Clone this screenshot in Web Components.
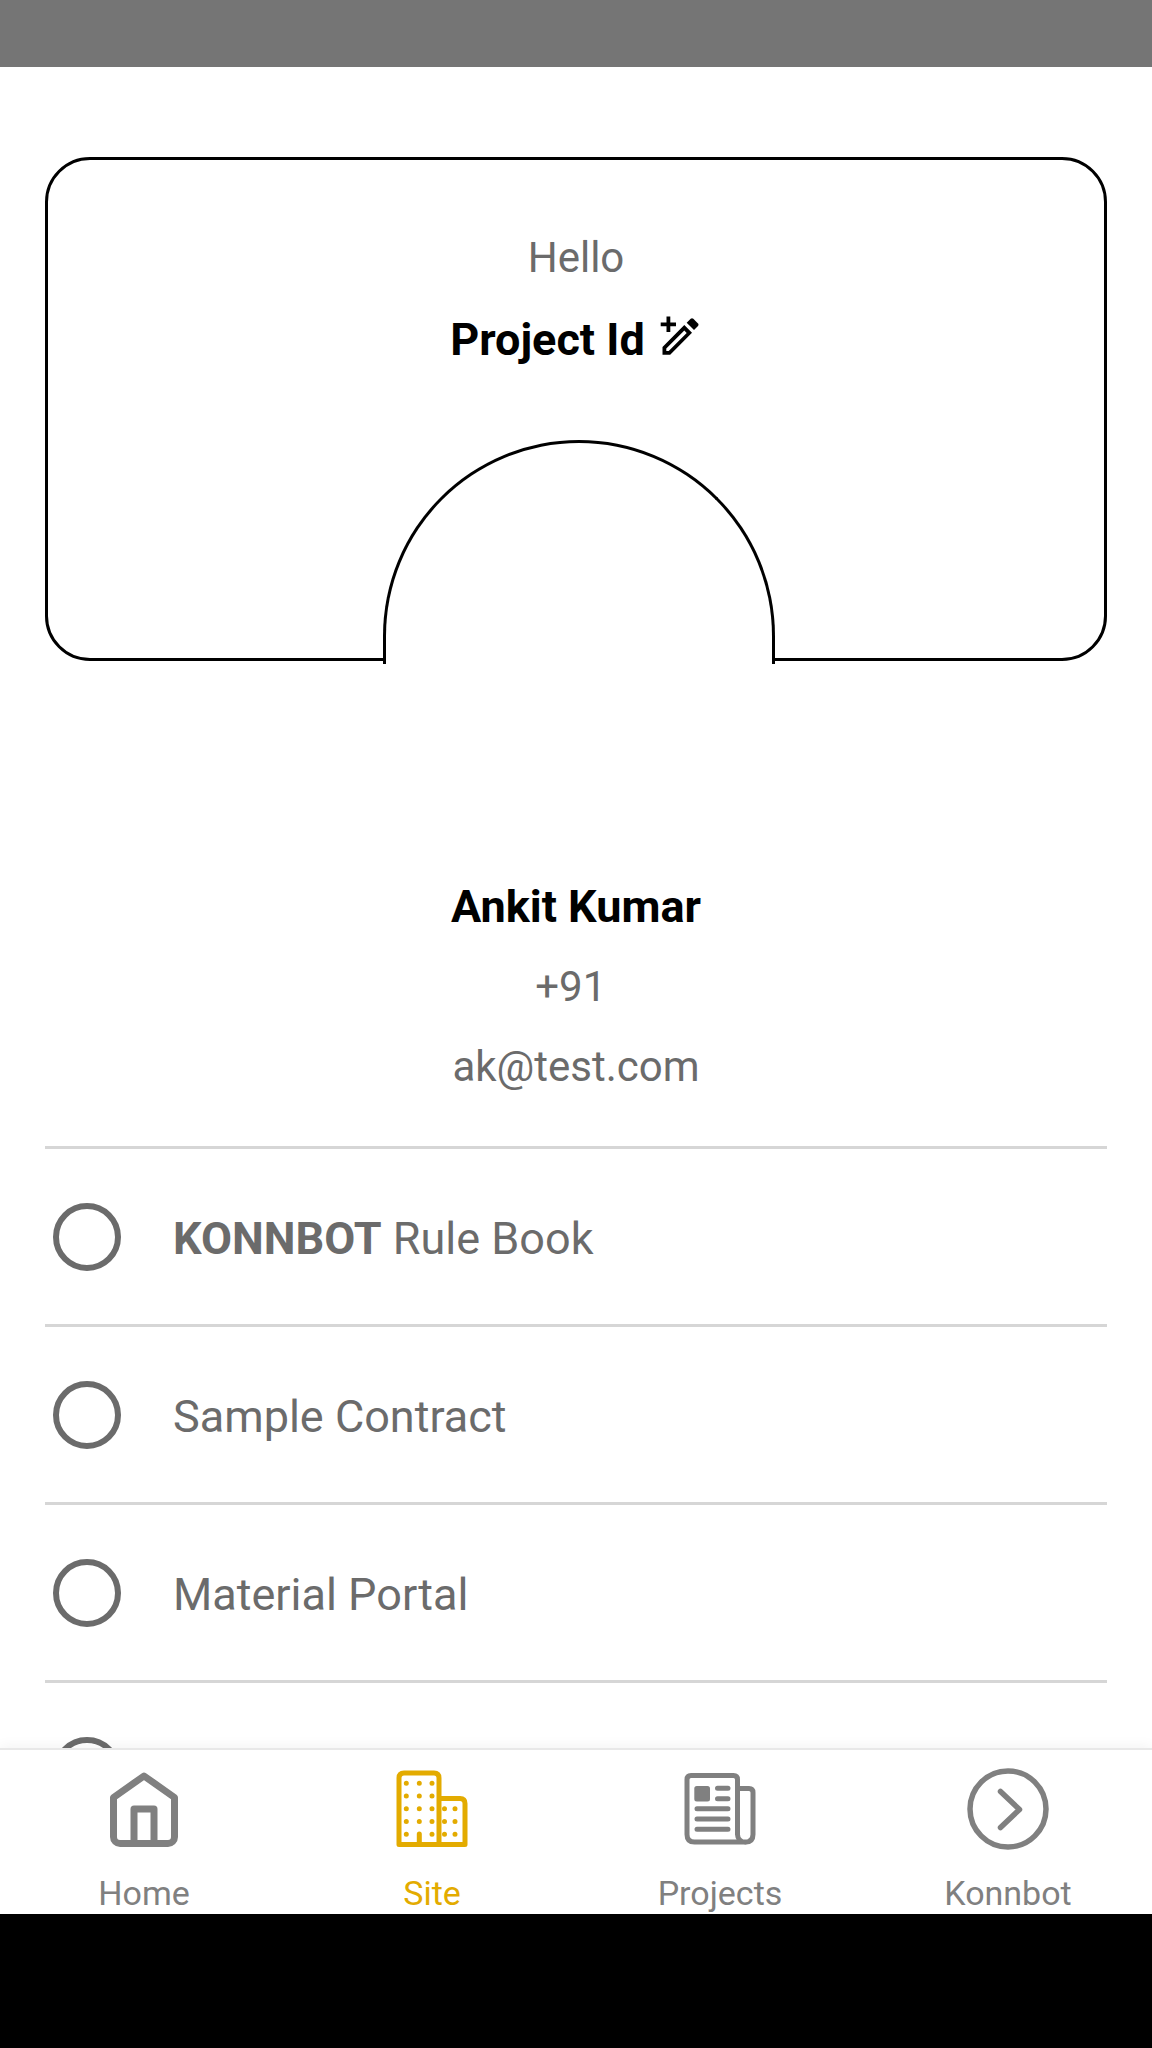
<!DOCTYPE html>
<html lang="en">
<head>
<meta charset="utf-8">
<meta name="viewport" content="width=device-width, initial-scale=1">
<title>Konnbot – Site</title>
<style>
  body { margin: 0; background: #fff; color: #6b6b6b; font-family: Roboto, "Noto Sans", sans-serif; font-size: 42px; }
</style>
</head>
<body>
<konn-app>
  <profile-card slot="content" greeting="Hello" project="Project Id"></profile-card>
  <user-details slot="content" name="Ankit Kumar" phone="+91" email="ak@test.com"></user-details>
  <option-list slot="content">
    <option-row><strong>KONNBOT</strong> Rule Book</option-row>
    <option-row>Sample Contract</option-row>
    <option-row>Material Portal</option-row>
    <option-row name="More"></option-row>
  </option-list>
  <nav-item slot="nav" label="Home">
    <svg viewBox="0 0 82 82" width="82" height="82" fill="none" stroke="currentColor" stroke-width="7" stroke-linejoin="round" aria-hidden="true">
      <path d="M10.5 29.5 41 8l30.500 21.500V69a6.500 6.500 0 0 1-6.500 6.500H17a6.500 6.500 0 0 1-6.500-6.500z"/>
      <path d="M31 75.500V41h20v34.500" stroke-linecap="round"/>
    </svg>
  </nav-item>
  <nav-item slot="nav" label="Site" current>
    <svg viewBox="0 0 82 82" width="82" height="82" fill="none" stroke="currentColor" stroke-width="5" stroke-linejoin="round" stroke-linecap="round" aria-hidden="true">
      <path d="M8 76.500V10q0-5 5-5h30q5 0 5 5v66.500zM48 30.500h21q5 0 5 5v41H48M28.300 66v10"/>
      <path d="M15.300 15.300h0M28.300 15.300h0M41 15.300h0M15.300 28h0M28.300 28h0M41 28h0M15.300 40.700h0M28.300 40.700h0M41 40.700h0M53.500 40.700h0M64 40.700h0M15.300 53.400h0M28.300 53.400h0M41 53.400h0M53.500 53.400h0M64 53.400h0M15.300 66.300h0M41 66.300h0M53.500 66.300h0M64 66.300h0"/>
    </svg>
  </nav-item>
  <nav-item slot="nav" label="Projects">
    <svg viewBox="0 0 82 82" width="82" height="82" fill="none" stroke="currentColor" stroke-width="5" stroke-linejoin="round" stroke-linecap="round" aria-hidden="true">
      <path d="M66.500 74H15.500Q8 74 8 66.500V11.500q0-4 4-4h42.500q4 0 4 4V66.500a7.750 7.750 0 0 0 15.500 0V24.500q0-4-4-4H58.500M66.500 74q7.500 0 7.500-7.500"/>
      <path d="M38.500 20.300h10.500M38.500 30.700h10.500M18 40.700h31M18 51h31M18 61.300h31"/>
      <rect x="15.300" y="18" width="15.700" height="15.400" rx="2.500" fill="currentColor" stroke="none"/>
    </svg>
  </nav-item>
  <nav-item slot="nav" label="Konnbot">
    <svg viewBox="0 0 82 82" width="82" height="82" fill="none" stroke="currentColor" stroke-width="5.500" stroke-linejoin="round" stroke-linecap="round" aria-hidden="true">
      <circle cx="41" cy="41" r="38"/>
      <path d="M33.500 23.500 52.500 41.500 33.500 59.500"/>
    </svg>
  </nav-item>
</konn-app>

<script>
class Base extends HTMLElement {
  connectedCallback() {
    if (!this.shadowRoot) this.attachShadow({ mode: "open" }).innerHTML = this.render();
  }
}

customElements.define("konn-app", class extends Base {
  render() {
    return `<style>
      :host { display: flex; flex-direction: column; height: 100vh; }
      .status { height: 67px; background: #757575; }
      main { flex: 1; min-height: 0; overflow: hidden; padding: 90px 45px 0; box-sizing: border-box; }
      nav { position: relative; display: flex; background: #fff; border-top: 2px solid #e8e8e8; box-shadow: 0 -2px 12px rgba(0,0,0,.05); }
      .system { height: 134px; background: #000; position: relative; }
    </style>
    <div class="status"></div>
    <main><slot name="content"></slot></main>
    <nav aria-label="Main"><slot name="nav"></slot></nav>
    <div class="system"></div>`;
  }
});

customElements.define("profile-card", class extends Base {
  render() {
    return `<style>
      :host { display: block; border: 3px solid #000; border-radius: 45px; padding-top: 57px; text-align: center; }
      p, h1 { margin: 0; font-size: 42px; font-weight: 400; line-height: 82px; }
      h1 { display: flex; justify-content: center; align-items: center; gap: 13px; height: 82px; font-size: 45px; font-weight: 700; color: #000; }
      button { all: unset; display: flex; padding-bottom: 4px; cursor: pointer; color: inherit; }
      .arch { box-sizing: border-box; width: 392px; height: 224px; margin: 59px 0 -6px calc(50% - 193px); border: 3px solid #000; border-bottom: 0; border-radius: 196px 196px 0 0; background: #fff; }
    </style>
    <p>${this.getAttribute("greeting")}</p>
    <h1>${this.getAttribute("project")}
      <button type="button" aria-label="Edit project">
        <svg viewBox="-2 0 44 44" width="44" height="44" fill="currentColor" aria-hidden="true">
          <path d="M6.500 .5h3.800v5.900h5.700v3.800h-5.700V16H6.500v-5.800H.7V6.400h5.800z"/>
          <path fill-rule="evenodd" d="M2.500 38.700v-7.700L24.300 9l7.700 7.700L10.200 38.700zM6.300 35h2.400L26.700 17l-2.400-2.600L6.300 32.600z"/>
          <path d="M26.700 6.700l4-4q1.300-1 2.600 0l4.700 4.700q1.200 1.300 0 2.600l-4 4z"/>
        </svg>
      </button>
    </h1>
    <div class="arch"></div>`;
  }
});

customElements.define("user-details", class extends Base {
  render() {
    return `<style>
      :host { display: block; padding: 206px 0 39px; text-align: center; }
      h2, p { margin: 0; font-size: 42px; font-weight: 400; line-height: 80px; }
      h2 { font-size: 45px; font-weight: 700; color: #000; }
    </style>
    <h2>${this.getAttribute("name")}</h2>
    <p>${this.getAttribute("phone")}&nbsp;</p>
    <p>${this.getAttribute("email")}</p>`;
  }
});

customElements.define("option-list", class extends Base {
  render() {
    return `<style>:host { display: flex; flex-direction: column; }</style><slot></slot>`;
  }
});

customElements.define("option-row", class extends Base {
  render() {
    const name = this.getAttribute("name");
    return `<style>
      :host { display: block; border-top: 3px solid #d6d6d6; }
      label { display: flex; align-items: center; gap: 52px; min-height: 175px; padding-left: 8px; font-size: 45px; cursor: pointer; }
      input { appearance: none; box-sizing: border-box; flex: none; width: 68px; height: 68px; margin: 0; border: 6px solid #6b6b6b; border-radius: 50%; }
      input:checked { background: #6b6b6b; background-clip: content-box; padding: 10px; }
      span { padding-top: 4px; }
    </style>
    <label><input type="radio"${name ? ` aria-label="${name}"` : ""}><span><slot></slot></span></label>`;
  }
});

customElements.define("nav-item", class extends Base {
  render() {
    return `<style>
      :host { display: block; flex: 1; color: #808080; }
      :host([current]) { color: #e3ab00; }
      a { display: flex; flex-direction: column; align-items: center; gap: 23px; padding: 18px 0 1px; color: inherit; text-decoration: none; font-size: 34px; line-height: 40px; }
      ::slotted(svg) { display: block; }
    </style>
    <a href="#${this.getAttribute("label").toLowerCase()}"${this.hasAttribute("current") ? ' aria-current="page"' : ""}><slot></slot><span>${this.getAttribute("label")}</span></a>`;
  }
});
</script>
</body>
</html>
